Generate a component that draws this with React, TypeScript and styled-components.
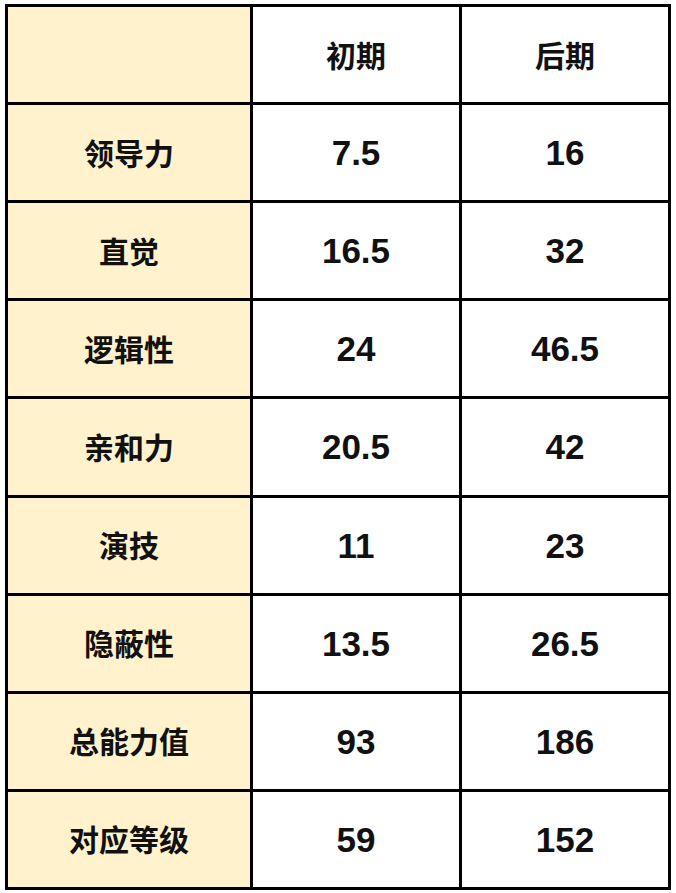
import React from "react";
import styled, { createGlobalStyle } from "styled-components";

const GlobalStyle = createGlobalStyle`
  html, body {
    margin: 0;
    padding: 0;
    background: #ffffff;
  }
  body {
    font-family: "Liberation Sans", "Noto Sans CJK SC", sans-serif;
  }
`;

const Page = styled.div`
  padding: 4px 0 0 5px;
`;

const Table = styled.div`
  display: grid;
  grid-template-columns: 242px 206px 206px;
  grid-template-rows: repeat(9, 1fr);
  gap: 3px;
  padding: 3px;
  width: 666px;
  height: 886px;
  box-sizing: border-box;
  background: #000000;
`;

const Cell = styled.div<{ $label?: boolean; $cjk?: boolean }>`
  display: flex;
  align-items: center;
  justify-content: center;
  background: ${(p) => (p.$label ? "#FFF2CC" : "#ffffff")};
  color: #111111;
  font-weight: 700;
  font-family: ${(p) =>
    p.$cjk
      ? '"Noto Sans CJK SC", sans-serif'
      : '"Liberation Sans", "Noto Sans CJK SC", sans-serif'};
  font-size: ${(p) => (p.$cjk ? "30px" : "35px")};
  line-height: 1;
  padding-bottom: ${(p) => (p.$cjk ? "2px" : "0")};
  box-sizing: border-box;
`;

const rows: [string, string, string][] = [
  ["领导力", "7.5", "16"],
  ["直觉", "16.5", "32"],
  ["逻辑性", "24", "46.5"],
  ["亲和力", "20.5", "42"],
  ["演技", "11", "23"],
  ["隐蔽性", "13.5", "26.5"],
  ["总能力值", "93", "186"],
  ["对应等级", "59", "152"],
];

export default function App() {
  return (
    <>
      <GlobalStyle />
      <Page>
        <Table>
          <Cell $label />
          <Cell $cjk>初期</Cell>
          <Cell $cjk>后期</Cell>
          {rows.map(([label, a, b]) => (
            <React.Fragment key={label}>
              <Cell $label $cjk>
                {label}
              </Cell>
              <Cell>{a}</Cell>
              <Cell>{b}</Cell>
            </React.Fragment>
          ))}
        </Table>
      </Page>
    </>
  );
}
